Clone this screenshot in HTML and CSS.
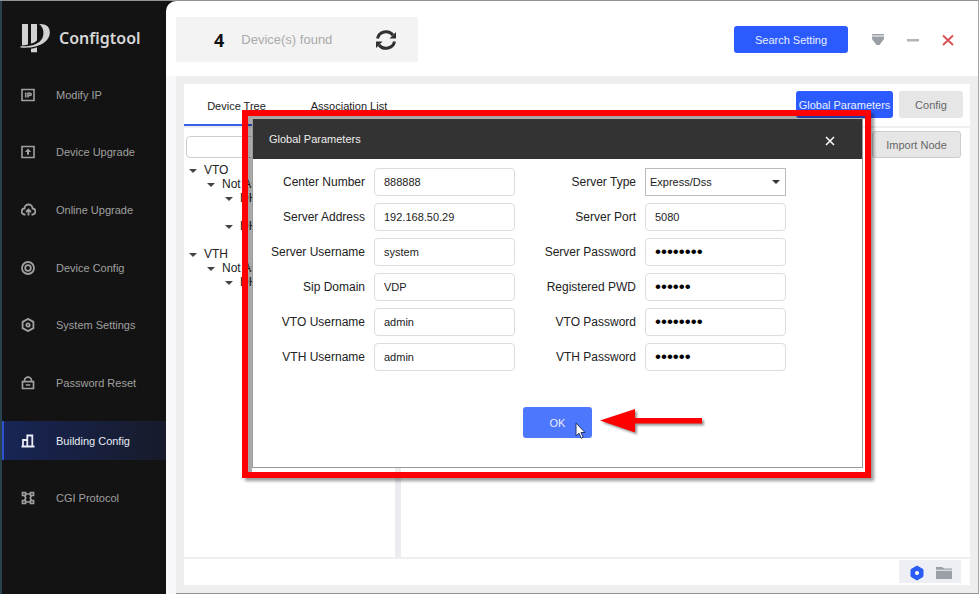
FILE: index.html
```html
<!DOCTYPE html>
<html lang="en">
<head>
    <meta charset="UTF-8">
    <title>Configtool</title>
    <link rel="stylesheet" href="styles.css">
</head>
<body>
<div class="app">
    <aside class="sidebar">
        <div class="brand">
            <svg class="brand-logo" width="30" height="30" viewBox="0 0 30 30" fill="#d2d2d2">
                <path d="M2 1h6v20.500q-3 1-6 1z"/>
                <path d="M11 1h6v16.500q-2.500 2.300-6 3.300z"/>
                <path d="M19 1c7-.3 10.800 2.500 10.800 8.500 0 9-11 16.500-29.300 15v-1.200c11 .5 19-2.300 21.800-8 2.200-5 1.500-11-3.300-14.300z"/>
                <path d="M11 25.800q3-.5 6-1.500v4.900h-6z"/>
            </svg>
            <span class="brand-name">Configtool</span>
        </div>
        <nav class="nav">
            <a href="#" class="nav-item">
                <svg width="14" height="14" viewBox="0 0 14 14" fill="none" stroke="currentColor" stroke-width="1.600"><path d="M1 1.500h12v11h-12z"/><path d="M4.700 4.500v5M7 9.500v-4.300h2.200q1 0 1 1.100t-1 1.100h-2"/></svg>
                <span>Modify IP</span>
            </a>
            <a href="#" class="nav-item">
                <svg width="14" height="14" viewBox="0 0 14 14" fill="none" stroke="currentColor" stroke-width="1.600"><path d="M1 1.500h12v11h-12z"/><path d="M7 3.500l3.200 3.500h-2.200v2.700h-2v-2.700h-2.200z" fill="currentColor" stroke="none"/></svg>
                <span>Device Upgrade</span>
            </a>
            <a href="#" class="nav-item">
                <svg width="15" height="14" viewBox="0 0 15 14" fill="none" stroke="currentColor" stroke-width="1.800"><path d="M4.500 11.500h-.7a3 3 0 0 1-.3-6 4 4 0 0 1 8 0 3 3 0 0 1-.3 6h-.7"/><path d="M7.500 12.500v-5.500M5 9l2.500-2.500 2.500 2.500"/></svg>
                <span>Online Upgrade</span>
            </a>
            <a href="#" class="nav-item">
                <svg width="14" height="14" viewBox="0 0 14 14" fill="none" stroke="currentColor" stroke-width="1.800"><circle cx="7" cy="7" r="6"/><circle cx="7" cy="7" r="2.800"/></svg>
                <span>Device Config</span>
            </a>
            <a href="#" class="nav-item">
                <svg width="14" height="14" viewBox="0 0 14 14" fill="none" stroke="currentColor" stroke-width="1.800"><path d="M7 .9l5.400 3v6.200l-5.400 3-5.400-3v-6.200z"/><circle cx="7" cy="7" r="1.700"/></svg>
                <span>System Settings</span>
            </a>
            <a href="#" class="nav-item">
                <svg width="14" height="14" viewBox="0 0 14 14" fill="none" stroke="currentColor" stroke-width="1.700"><path d="M1.500 5.700h11v6.800h-11zM3.500 5.500v-1a3.500 3.300 0 0 1 7 0v1M4.700 9h4.600"/></svg>
                <span>Password Reset</span>
            </a>
            <a href="#" class="nav-item active">
                <svg width="14" height="14" viewBox="0 0 14 14" fill="none" stroke="currentColor" stroke-width="1.800"><path d="M.5 12.500h13M2 12.500v-6.500h4M6.300 12.500v-11h5v11"/></svg>
                <span>Building Config</span>
            </a>
            <a href="#" class="nav-item">
                <svg width="14" height="14" viewBox="0 0 14 14" fill="none" stroke="currentColor" stroke-width="1.700"><path d="M1.500 1.500h3v3h-3zM9.500 1.500h3v3h-3zM1.500 9.500h3v3h-3zM9.500 9.500h3v3h-3zM4.500 3h5M4.500 11h5M3.500 4.500l1.200 2.500-1.200 2.500M10.500 4.500l-1.200 2.500 1.200 2.500"/></svg>
                <span>CGI Protocol</span>
            </a>
        </nav>
    </aside>

    <main class="main">
        <header class="header">
            <div class="found">
                <strong class="found-count">4</strong>
                <span class="found-text">Device(s) found</span>
                <button type="button" class="icon-btn" aria-label="Refresh">
                    <svg width="22" height="22" viewBox="0 0 22 22" fill="none" stroke="#303030" stroke-width="3"><path d="M2.500 9.500a8.700 8.200 0 0 1 15.500-3.500M19.500 12.500a8.700 8.200 0 0 1-15.500 3.500"/><path d="M21 3v6.500h-6.500zM1 19v-6.500h6.500z" fill="#303030" stroke="none"/></svg>
                </button>
            </div>
            <div class="header-tools">
                <button type="button" class="btn btn-primary btn-search">Search Setting</button>
                <button type="button" class="icon-btn" aria-label="Menu">
                    <svg width="14" height="14" viewBox="0 0 14 14" fill="#9a9fa5"><path d="M1 1h12v1.500h-12zM1 3.500h12v2.500l-4.500 6h-3l-4.500-6z"/></svg>
                </button>
                <button type="button" class="icon-btn" aria-label="Minimize">
                    <svg width="14" height="14" viewBox="0 0 14 14" fill="#b1b4b8"><path d="M1 6h12v2.500h-12z"/></svg>
                </button>
                <button type="button" class="icon-btn" aria-label="Close">
                    <svg width="14" height="14" viewBox="0 0 14 14" fill="none" stroke="#d9545a" stroke-width="2"><path d="M2 2.500l10 9.500M12 2.500l-10 9.500"/></svg>
                </button>
            </div>
        </header>

        <div class="content">
            <section class="panel">
                <div class="tabs">
                    <button type="button" class="tab active">Device Tree</button>
                    <button type="button" class="tab">Association List</button>
                    <div class="tab-actions">
                        <button type="button" class="btn btn-primary btn-global">Global Parameters</button>
                        <button type="button" class="btn btn-config">Config</button>
                    </div>
                </div>
                <div class="split">
                    <div class="tree-pane">
                        <input type="text" class="tree-search" aria-label="Search">
                        <ul class="tree">
                            <li><span>VTO</span>
                                <ul>
                                    <li><span>Not As</span>
                                        <ul>
                                            <li class="device"><span>DH</span></li>
                                            <li class="device"><span>DH</span></li>
                                        </ul>
                                    </li>
                                </ul>
                            </li>
                            <li><span>VTH</span>
                                <ul>
                                    <li><span>Not As</span>
                                        <ul>
                                            <li class="device"><span>DH</span></li>
                                        </ul>
                                    </li>
                                </ul>
                            </li>
                        </ul>
                    </div>
                    <div class="node-pane">
                        <button type="button" class="btn btn-node">Import Node</button>
                    </div>
                </div>
                <footer class="status">
                    <div class="status-tools">
                        <button type="button" class="icon-btn" aria-label="Settings">
                            <svg width="16" height="16" viewBox="0 0 16 16"><path d="M8 1l6 3.500v7l-6 3.500-6-3.500v-7z" fill="#2a5cf6" stroke="#2a5cf6" stroke-linejoin="round"/><circle cx="8" cy="8" r="2" fill="#fff"/></svg>
                        </button>
                        <button type="button" class="icon-btn" aria-label="Open folder">
                            <svg width="16" height="16" viewBox="0 0 16 16" fill="#9a9fa8"><path d="M0 2h6l2 1.500h8v1.500h-16zM0 6h16v8h-16z"/><path d="M0 4.500h16v1h-16z" fill="#c5c8ce"/></svg>
                        </button>
                    </div>
                </footer>
            </section>
        </div>
    </main>
</div>

<div class="callout">
    <form class="dialog" role="dialog" aria-labelledby="dialogTitle">
        <div class="dialog-head">
            <span id="dialogTitle">Global Parameters</span>
            <button type="button" class="icon-btn" aria-label="Close dialog">
                <svg width="10" height="14" viewBox="0 0 10 14" fill="none" stroke="#fff" stroke-width="1.500"><path d="M1 5l8 8M9 5l-8 8"/></svg>
            </button>
        </div>
        <div class="fields">
            <label for="centerNumber">Center Number</label>
            <input id="centerNumber" type="text" value="888888">
            <label for="serverType">Server Type</label>
            <div class="select">
                <select id="serverType"><option>Express/Dss</option></select>
            </div>
            <label for="serverAddress">Server Address</label>
            <input id="serverAddress" type="text" value="192.168.50.29">
            <label for="serverPort">Server Port</label>
            <input id="serverPort" type="text" value="5080">
            <label for="serverUser">Server Username</label>
            <input id="serverUser" type="text" value="system">
            <label for="serverPwd">Server Password</label>
            <input id="serverPwd" type="password" value="password">
            <label for="sipDomain">Sip Domain</label>
            <input id="sipDomain" type="text" value="VDP">
            <label for="registeredPwd">Registered PWD</label>
            <input id="registeredPwd" type="password" value="123456">
            <label for="vtoUser">VTO Username</label>
            <input id="vtoUser" type="text" value="admin">
            <label for="vtoPwd">VTO Password</label>
            <input id="vtoPwd" type="password" value="password">
            <label for="vthUser">VTH Username</label>
            <input id="vthUser" type="text" value="admin">
            <label for="vthPwd">VTH Password</label>
            <input id="vthPwd" type="password" value="123456">
        </div>
        <button type="button" class="btn btn-ok">OK</button>
    </form>
    <svg class="arrow" width="106" height="30" viewBox="0 0 106 30" fill="#f00"><path d="M0 11.500l35-11.500v9h67v5.500h-67v9z"/></svg>
    <svg class="cursor" width="12" height="18" viewBox="0 0 12 18" fill="#fff" stroke="#263465"><path d="M1 1v13l3-2.800 2.200 5 2-1-2.200-4.700h4z"/></svg>
</div>
</body>
</html>
```
FILE: styles.css
```css
* {
    box-sizing: border-box;
}

body {
    margin: 0;
    overflow: hidden;
    background: #131313;
    font-family: "Liberation Sans", Arial, sans-serif;
    font-size: 12px;
    color: #222;
}

button, input, select {
    font: inherit;
    color: inherit;
}

.app {
    display: flex;
    height: 100vh;
    border-top: 1px solid #909494;
    border-right: 1px solid #a5a5a5;
}

/* sidebar */
.sidebar {
    display: flex;
    flex-direction: column;
    width: 166px;
    padding-bottom: 76px;
    background: #131313;
    border-left: 2px solid #29414d;
}

.brand {
    display: flex;
    align-items: center;
    gap: 9px;
    height: 74px;
    padding-left: 18px;
}

.brand-logo {
    flex: none;
}

.brand-name {
    font-family: "Noto Sans", sans-serif;
    font-size: 16px;
    font-weight: 600;
    color: #d6d6d6;
}

.nav {
    display: flex;
    flex: 1;
    flex-direction: column;
    justify-content: space-between;
}

.nav-item {
    display: grid;
    grid-template-columns: 16px 1fr;
    align-items: center;
    justify-items: start;
    gap: 20px;
    height: 39px;
    padding-left: 18px;
    font-size: 11px;
    color: #a0a0a0;
    text-decoration: none;
}

.nav-item svg {
    justify-self: center;
}

.nav-item.active {
    color: #e8ecf5;
    background: linear-gradient(90deg, #182555, #171b2a);
    box-shadow: inset 2px 0 #2c52d0;
}

/* main area */
.main {
    display: flex;
    flex: 1;
    flex-direction: column;
    background: #fff;
    border-top-left-radius: 10px;
    overflow: hidden;
}

.header {
    display: flex;
    align-items: center;
    justify-content: space-between;
    height: 75px;
    padding: 2px 23px 0 10px;
}

.found {
    display: flex;
    align-items: center;
    width: 242px;
    height: 45px;
    padding: 0 21px 0 38px;
    background: #f3f3f3;
}

.found-count {
    font-family: "Noto Sans", sans-serif;
    font-size: 18px;
    color: #111;
}

.found-text {
    flex: 1;
    margin-left: 17px;
    font-size: 13px;
    color: #aaa;
}

.icon-btn {
    display: block;
    padding: 0;
    border: 0;
    background: none;
}

.icon-btn svg {
    display: block;
}

.header-tools {
    display: flex;
    align-items: center;
    gap: 21px;
}

.btn {
    height: 27px;
    padding: 0;
    border: 0;
    border-radius: 3px;
    font-size: 11px;
    color: #666;
    background: #e6e6e6;
}

.btn-primary {
    color: #e8eeff;
    background: #2b5bff;
}

.btn-search {
    width: 114px;
    margin-right: 2px;
}

.content {
    display: flex;
    flex: 1;
    padding: 8px;
    margin-left: 10px;
    background: #eee;
    border-bottom: 1px solid #8c9094;
    box-shadow: -10px 0 #f8f8fb;
}

.panel {
    display: flex;
    flex: 1;
    flex-direction: column;
    background: #fff;
}

.tabs {
    display: flex;
    height: 44px;
    border-bottom: 2px solid #eeeef3;
}

.tab {
    width: 105px;
    height: 42px;
    padding: 4px 0 0;
    border: 0;
    border-bottom: 2px solid transparent;
    background: none;
    font-size: 11px;
}

.tab + .tab {
    width: 120px;
}

.tab.active {
    border-bottom-color: #3560e8;
}

.tab-actions {
    display: flex;
    gap: 6px;
    margin-left: auto;
    padding: 7px 7px 0 0;
}

.btn-global {
    width: 97px;
}

.btn-config {
    width: 64px;
}

.split {
    display: flex;
    flex: 1;
}

.tree-pane {
    width: 217px;
    padding: 8px 2px 0;
    border-right: 6px solid #ebebf0;
}

.tree-search {
    display: block;
    width: 100%;
    height: 22px;
    margin-bottom: 5px;
    border: 1px solid #ccc;
    border-radius: 4px;
}

.tree, .tree ul {
    margin: 0;
    padding: 0;
    list-style: none;
}

.tree {
    padding-left: 3px;
    line-height: 14px;
}

.tree ul {
    padding-left: 18px;
}

.tree li > span::before {
    content: "";
    display: inline-block;
    margin-right: 7px;
    border: 4px solid transparent;
    border-top-color: #444;
    border-bottom: 0;
    vertical-align: middle;
}

.tree .device {
    height: 28px;
}

.node-pane {
    flex: 1;
    padding: 3px 9px 0;
    text-align: right;
}

.btn-node {
    width: 89px;
    border: 1px solid #ccc;
}

.status {
    display: flex;
    justify-content: flex-end;
    height: 28px;
    padding: 1px 9px 2px;
    border-top: 2px solid #eeeef3;
}

.status-tools {
    display: flex;
    align-items: center;
    gap: 11px;
    width: 62px;
    padding: 2px 10px 0;
    background: #eeeff5;
}

/* highlighted dialog */
.callout {
    position: absolute;
    top: 110px;
    left: 242px;
    width: 629px;
    height: 368px;
    padding: 3px 2px 4px 4px;
    border: 6px solid #f00;
    box-shadow: 3px 3px 3px rgba(0, 0, 0, .4), inset 4px 3px 1px rgba(0, 0, 0, .35);
}

.dialog {
    display: flex;
    flex-direction: column;
    height: 100%;
    background: #fff;
    border: 1px solid #999;
    border-top: 0;
}

.dialog-head {
    display: flex;
    align-items: center;
    justify-content: space-between;
    height: 40px;
    padding: 0 27px 0 16px;
    font-size: 11px;
    color: #eee;
    background: #333;
}

.fields {
    display: grid;
    grid-template-columns: 112px 141px 112px 141px;
    align-items: center;
    gap: 7px 9px;
    padding-top: 9px;
    margin-bottom: 36px;
}

.fields label {
    text-align: right;
}

.fields input, .fields select {
    display: block;
    width: 100%;
    height: 28px;
    padding: 0 9px;
    border: 1px solid #ddd;
    border-radius: 4px;
    background: #fff;
    font-size: 11px;
}

.fields input[type="password"] {
    font-size: 17px;
    color: #000;
}

.select {
    position: relative;
}

.fields select {
    padding: 0 4px;
    border-color: #bbb;
    border-radius: 0;
    appearance: none;
}

.select::after {
    content: "";
    position: absolute;
    top: 12px;
    right: 6px;
    border: 4px solid transparent;
    border-top-color: #333;
    border-bottom: 0;
    pointer-events: none;
}

.btn-ok {
    align-self: center;
    width: 69px;
    height: 31px;
    color: #e8eeff;
    background: #4d77fc;
}

.arrow {
    position: absolute;
    top: 293px;
    left: 352px;
    filter: drop-shadow(2px 2px 1px rgba(0, 0, 0, .4));
}

.cursor {
    position: absolute;
    top: 306px;
    left: 327px;
}
```
